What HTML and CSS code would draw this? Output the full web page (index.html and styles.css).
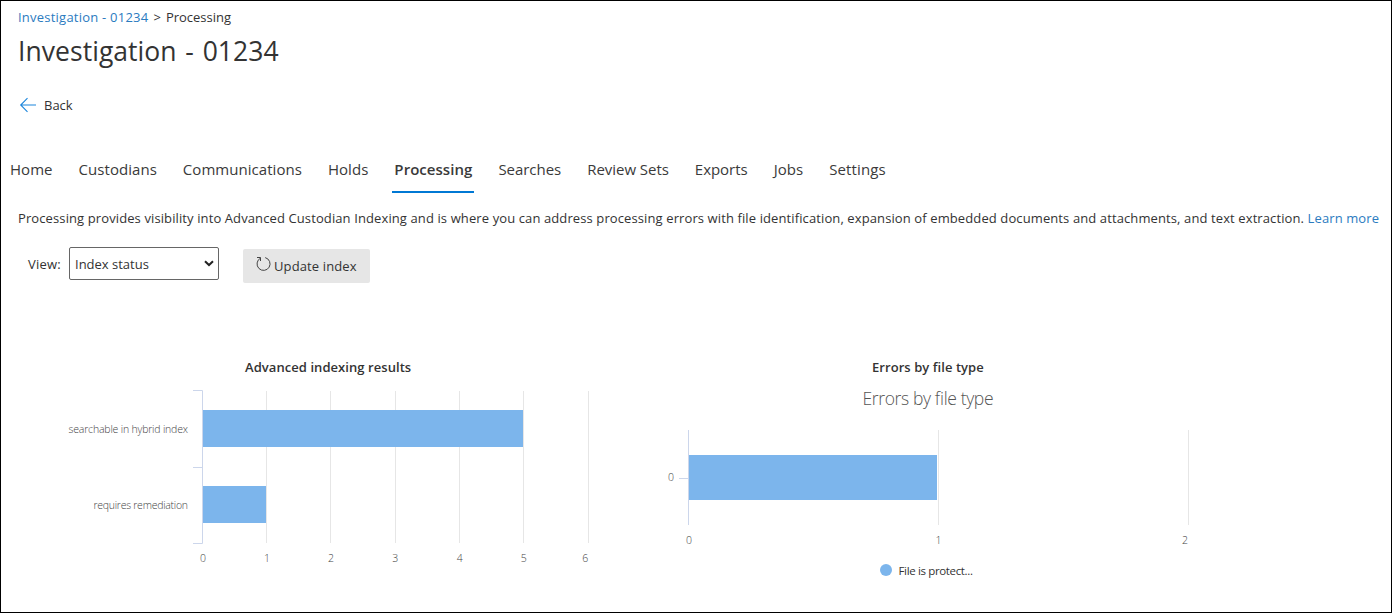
FILE: index.html
```html
<!DOCTYPE html>
<html lang="en">
<head>
<meta charset="utf-8">
<title>Investigation - 01234</title>
<link rel="stylesheet" href="styles.css">
</head>
<body>
<main class="page">
  <nav class="breadcrumb"><a href="#">Investigation - 01234</a><span class="sep">&gt;</span><span>Processing</span></nav>
  <h1 class="title">Investigation - 01234</h1>
  <a class="back" href="#">
    <svg width="17" height="16" viewBox="0 0 17 16"><path d="M8.5 1.2 1.7 8 8.5 14.8M1.7 8H17" fill="none" stroke="#1c86dc" stroke-width="1.1"/></svg>
    <span>Back</span>
  </a>
  <nav class="tabs">
    <a class="tab">Home</a><a class="tab">Custodians</a><a class="tab">Communications</a><a class="tab">Holds</a><a class="tab active">Processing</a><a class="tab tight">Searches</a><a class="tab tight">Review Sets</a><a class="tab tight">Exports</a><a class="tab">Jobs</a><a class="tab wide">Settings</a>
  </nav>
  <p class="intro">Processing provides visibility into Advanced Custodian Indexing and is where you can address processing errors with file identification, expansion of embedded documents and attachments, and text extraction. <a href="#">Learn more</a></p>
  <div class="toolbar">
    <span class="view-label">View:</span>
    <div class="select"><span>Index status</span>
      <svg width="10" height="7" viewBox="0 0 10 7"><path d="M1 1.2 5 5 9 1.2" fill="none" stroke="#222" stroke-width="2"/></svg>
    </div>
    <button class="update">
      <svg width="16" height="16" viewBox="0 0 16 16"><path d="M10.2 1.6A6.5 6.5 0 1 1 5.4 2.2M2 1.5H5.5V5" fill="none" stroke="#444" stroke-width="1"/></svg>
      <span>Update index</span>
    </button>
  </div>
  <div class="charts">
    <section class="chart">
      <h2 class="chart-title first">Advanced indexing results</h2>
      <svg width="654" height="220" viewBox="1 380 654 220">
        <path class="grid" d="M266.5 391V543M330.5 391V543M395.5 391V543M459.5 391V543M523.5 391V543M588.5 391V543"/>
        <path class="bar" d="M203 410H523V447H203zM203 486H266V523H203z"/>
        <path class="axis" d="M193 390.5H202.5V543.5H193M193 467.5H202"/>
        <g class="label">
          <text x="68.5" y="433" textLength="119.5">searchable in hybrid index</text>
          <text x="93.5" y="509" textLength="94.5">requires remediation</text>
          <g class="mid"><text x="203" y="562">0</text><text x="267" y="562">1</text><text x="331" y="562">2</text><text x="395.3" y="562">3</text><text x="459.7" y="562">4</text><text x="523.7" y="562">5</text><text x="585.3" y="562">6</text></g>
        </g>
      </svg>
    </section>
    <section class="chart">
      <h2 class="chart-title second">Errors by file type</h2>
      <svg width="736" height="220" viewBox="655 380 736 220">
        <text class="subtitle" x="862.5" y="405" textLength="131">Errors by file type</text>
        <path class="grid" d="M938.5 430V525M1188.5 430V525"/>
        <path class="bar" d="M689 455H937V500H689z"/>
        <path class="axis" d="M688.5 430V525M679 478.5H688"/>
        <g class="label mid"><text x="671" y="481">0</text><text x="689" y="544">0</text><text x="938.5" y="544">1</text><text x="1185" y="544">2</text></g>
        <circle class="bar" cx="886" cy="570" r="6"/>
        <text class="legend" x="898.5" y="575" textLength="74.5">File is protect...</text>
      </svg>
    </section>
  </div>
</main>
</body>
</html>
```
FILE: styles.css
```css
* { box-sizing: border-box; }
body { margin: 0; font-family: "Open Sans", "Noto Sans", sans-serif; color: #333; background: #fff; }
a { color: #2b7bbf; text-decoration: none; }
.page { width: 1392px; height: 613px; border: 1px solid #000; overflow: hidden; display: flex; flex-direction: column; white-space: nowrap; }
.breadcrumb { margin: 7px 0 0 17px; height: 18px; line-height: 18px; font-size: 13px; display: flex; gap: 5px; }
.breadcrumb a { letter-spacing: 0.23px; }
.sep { font-size: 13px; }
.title { margin: 7px 0 0 17px; height: 36px; line-height: 36px; font-size: 26.5px; font-weight: 400; letter-spacing: 0.05px; word-spacing: 1.8px; }
.back { margin: 26px 0 0 18px; height: 20px; display: flex; align-items: center; gap: 8px; font-size: 13px; color: #333; }
.tabs { margin: 41px 0 0 7px; height: 37px; display: flex; gap: 22px; }
.tab { padding: 0 2px; line-height: 26px; font-size: 15px; letter-spacing: 0.045px; color: #3a3a3a; }
.tab.active { font-weight: 600; border-bottom: 2px solid #0078d4; }
.tab.tight { letter-spacing: -0.035px; }
.tab.wide { letter-spacing: 0.12px; }
.intro { margin: 15px 0 0 17px; height: 20px; line-height: 20px; font-size: 13px; letter-spacing: 0.108px; }
.toolbar { margin: 19px 0 0 27px; height: 37px; display: flex; align-items: flex-start; font-size: 13px; }
.view-label { width: 41px; line-height: 35px; letter-spacing: 0.2px; }
.select { width: 150px; height: 33px; border: 1px solid #666; border-radius: 2px; padding: 0 4px 0 5px; display: flex; align-items: center; justify-content: space-between; }
.update { margin: 2px 0 0 24px; width: 127px; height: 34px; padding: 0 0 0 12px; border: 0; border-radius: 2px; background: #e6e6e6; font: inherit; letter-spacing: 0.12px; color: #333; display: flex; align-items: center; gap: 3px; }
.update svg { margin-top: -4px; }
.charts { margin-top: 73px; display: grid; grid-template-columns: 654px 736px; }
.chart svg { display: block; }
.chart-title { margin: 0 0 3px; height: 20px; line-height: 20px; font-size: 13px; font-weight: 600; letter-spacing: 0.06px; }
.first { padding-left: 244px; }
.second { padding-left: 217px; }
.grid { fill: none; stroke: #e6e6e6; }
.axis { fill: none; stroke: #ccd6eb; }
.bar { fill: #7cb5ec; }
.label { font-size: 10.5px; font-weight: 300; fill: #444; }
.mid { text-anchor: middle; }
.subtitle { font-size: 17.5px; font-weight: 300; fill: #555; }
.legend { font-size: 11.5px; fill: #333; }
```
